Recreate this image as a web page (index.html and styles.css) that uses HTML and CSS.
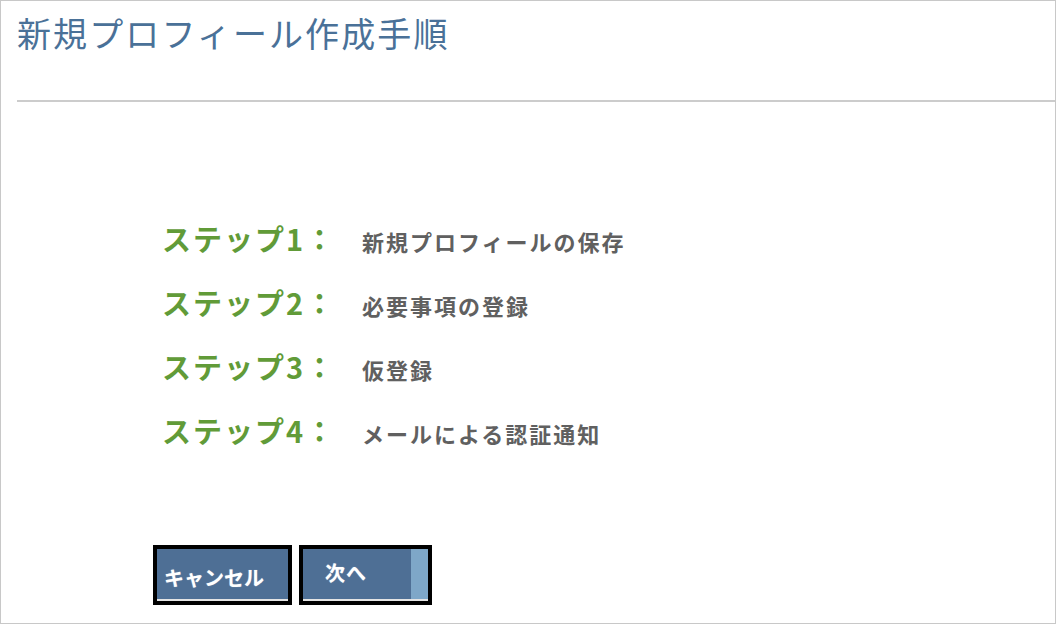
FILE: index.html
```html
<!DOCTYPE html>
<html lang="ja">
<head>
<meta charset="utf-8">
<title>新規プロフィール作成手順</title>
<link rel="stylesheet" href="styles.css">
</head>
<body>
<div class="page">
  <header class="head">
    <h1 class="title">新規プロフィール作成手順</h1>
  </header>
  <div class="rule"></div>
  <ol class="steps">
    <li class="step"><span class="label">ステップ1：</span><span class="desc">新規プロフィールの保存</span></li>
    <li class="step"><span class="label">ステップ2：</span><span class="desc">必要事項の登録</span></li>
    <li class="step"><span class="label">ステップ3：</span><span class="desc">仮登録</span></li>
    <li class="step"><span class="label">ステップ4：</span><span class="desc">メールによる認証通知</span></li>
  </ol>
  <div class="actions">
    <button class="btn btn-cancel" type="button"><span class="btn-text">キャンセル</span></button>
    <button class="btn btn-next" type="button"><span class="btn-text">次へ</span><span class="btn-edge"></span></button>
  </div>
</div>
</body>
</html>
```

FILE: styles.css
```css
html, body {
  margin: 0;
  padding: 0;
  background: #ffffff;
}

.page {
  box-sizing: border-box;
  width: 1056px;
  height: 624px;
  border: 1px solid #c8c8c8;
  background: #ffffff;
  font-family: "Noto Sans CJK JP", "Noto Sans", sans-serif;
  display: flex;
  flex-direction: column;
}

.head {
  height: 99px;
  padding: 0 0 0 16px;
  box-sizing: border-box;
}

.title {
  margin: 0;
  padding-top: 12px;
  font-size: 34px;
  line-height: 40px;
  font-weight: 400;
  color: #4a7198;
  letter-spacing: 2.1px;
}

.rule {
  height: 2px;
  margin-left: 16px;
  background: #cccccc;
}

.steps {
  list-style: none;
  margin: 0;
  padding: 104px 0 0 161px;
}

.step {
  display: grid;
  grid-template-columns: 200px auto;
  align-items: baseline;
  height: 64px;
  line-height: 64px;
}

.label {
  font-size: 29px;
  font-weight: 700;
  color: #619b38;
  letter-spacing: 2px;
}

.desc {
  font-size: 22px;
  font-weight: 700;
  color: #606060;
  letter-spacing: 2px;
}

.actions {
  display: flex;
  gap: 7px;
  margin: 83px 0 0 152px;
}

.btn {
  box-sizing: border-box;
  height: 60px;
  border: 4px solid #000000;
  padding: 0;
  margin: 0;
  background: #4e6f95;
  box-shadow: inset 0 -2px 0 #e4e4e4;
  color: #ffffff;
  font-family: "Noto Sans CJK JP", "Noto Sans", sans-serif;
  font-weight: 700;
  font-size: 20px;
  display: flex;
  align-items: flex-start;
  position: relative;
}

.btn-cancel {
  width: 139px;
  padding: 15px 0 0 7px;
}

.btn-next {
  width: 133px;
  padding: 10px 0 0 22px;
  letter-spacing: 1px;
}

.btn-text {
  line-height: 28px;
  text-shadow: 0 0 1px rgba(255, 255, 255, 0.5);
}

.btn-edge {
  position: absolute;
  top: 0;
  right: 0;
  bottom: 2px;
  width: 17px;
  background: #7ea7c8;
}
```
